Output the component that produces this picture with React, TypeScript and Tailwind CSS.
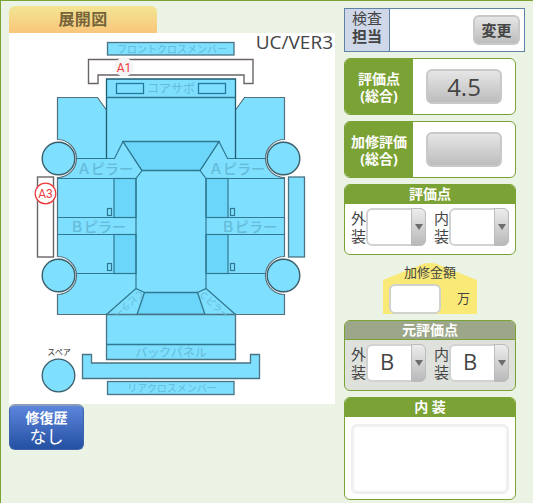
import type { ReactNode } from "react";

const BLUE = "#7fdfff";
const GLASS = "#6cd6fa";
const LINE = "#2f7890";

const buttonStyle =
  "rounded-md border-2 border-[#c9c9c9] bg-linear-to-b from-[#e6e6e6] to-[#bdbdbd] text-[#444]";

// Left side of the body, the right side is the same shape mirrored
function BodySide() {
  return (
    <g stroke={LINE} strokeWidth="1.2" fill={BLUE}>
      <path
        stroke="none"
        d="M106.5 110 L97.5 97.5 H57.5 V139.5 A19 19 0 0 1 57.5 177.5 V256.5 A19 19 0 0 1 57.5 294.5 V314.5 H172 V110 Z"
      />
      <path
        stroke="#55707c"
        fill="none"
        d="M106.5 110 L97.5 97.5 H57.5 V139.5 A19 19 0 0 1 57.5 177.5 V256.5 A19 19 0 0 1 57.5 294.5 V314.5 H107"
      />
      <path
        fill="none"
        stroke="#ececec"
        strokeWidth="2"
        d="M58 141 A17.7 17.7 0 0 1 58 176 M58 258 A17.7 17.7 0 0 1 58 293"
      />
      <rect x="114" y="178.5" width="22" height="39" fill={GLASS} />
      <rect x="114" y="234.5" width="22" height="39" fill={GLASS} />
      <path
        fill="none"
        d="M77 158.5 H114.5 L123 141.5 L142 170.5 L136 178.5 V288.5 L144.5 292.5 M57.5 178.5 H136 M57.5 217.5 H136 M57.5 234.5 H136 M77 273.5 H136 M136 288.5 L106.5 314.5"
      />
      <rect x="107.5" y="208.5" width="4" height="7" />
      <rect x="107.5" y="263.5" width="4" height="7" />
      <circle cx="58.5" cy="158.5" r="16.3" stroke="#3c5f6c" strokeWidth="1.4" />
      <circle cx="58.5" cy="275.5" r="16.3" stroke="#3c5f6c" strokeWidth="1.4" />
    </g>
  );
}

function CarDiagram() {
  return (
    <svg
      viewBox="9 33 326 371"
      className="block w-full overflow-visible bg-white font-['Open_Sans','Noto_Sans_CJK_JP',sans-serif]"
      role="img"
      aria-label="展開図"
    >
      <BodySide />
      <g transform="matrix(-1 0 0 1 342 0)">
        <BodySide />
      </g>

      <g fill={BLUE} stroke="#4a7383" strokeWidth="1.3">
        <path stroke="none" d="M106.5 79 H235.5 V141 H106.5 Z" />
        <path fill="none" stroke="#1f5c70" d="M106.5 158.5 V79 H235.5 V158.5" />
        <path d="M106.5 97.5 H235.5" stroke={LINE} />
        <rect x="116.5" y="83.5" width="27" height="10" stroke="#24799a" />
        <rect x="198.5" y="83.5" width="27" height="10" stroke="#24799a" />
        {/* windshield and rear window */}
        <path d="M123 141.5 H219 L200 170.5 H142 Z" fill={GLASS} stroke={LINE} />
        <path d="M144.5 292.5 H197.5 L205 314.5 H137 Z" fill={GLASS} stroke={LINE} />
        <rect x="107.5" y="42.5" width="126.5" height="12.5" />
        <path d="M106.5 314.5 H235.5 V359.5 H106.5 Z" />
        <path d="M106.5 344.5 H235.5" stroke={LINE} />
        <path d="M82.5 354.5 H91.5 V363 H250.5 V354.5 H259.5 V378.5 H82.5 Z" />
        <rect x="107.5" y="381.5" width="126.5" height="13" />
        <rect x="288.5" y="177" width="16" height="80" />
        <circle cx="58.5" cy="375.5" r="16.3" stroke="#3c5f6c" />
      </g>

      <g fill="#fff" stroke="#6b6466" strokeWidth="1.4">
        <path d="M88.5 59.5 H253 V83.5 H244 V75 H98 V83.5 H88.5 Z" />
        <rect x="37.5" y="177" width="16" height="80" />
      </g>

      <g fill="#64bbd8" textAnchor="middle" fontSize="10">
        <text x="172" y="52.5">フロントクロスメンバー</text>
        <text x="171" y="92.5" fontSize="12">コアサポ</text>
        <text x="172" y="392">リアクロスメンバー</text>
        <text x="171" y="356.5" fontSize="12">バックパネル</text>
        <g fontSize="14" fontWeight="500">
          <text x="105" y="174">Ａピラー</text>
          <text x="237" y="174">Ａピラー</text>
          <text x="98" y="231.5">Ｂピラー</text>
          <text x="249" y="231.5">Ｂピラー</text>
        </g>
        <g fontSize="9">
          <text transform="translate(127 301) rotate(139)">Ｃピラー</text>
          <text transform="translate(212 307) rotate(42)">Ｃピラー</text>
        </g>
        <text x="59" y="355" fontSize="8" fill="#333">スペア</text>
      </g>

      <circle cx="124" cy="67" r="9.5" fill="#f4f4f4" />
      <circle cx="45.5" cy="193.5" r="10.3" fill="#fff" stroke="#f0383c" strokeWidth="1.2" />
      <g fill="#f0383c" textAnchor="middle" fontSize="12" className="font-[Roboto,sans-serif]">
        <text x="124" y="71.5">A1</text>
        <text x="45.5" y="197.5">A3</text>
      </g>
      <text x="333" y="49" textAnchor="end" fontSize="19" fill="#444">
        UC/VER3
      </text>
    </svg>
  );
}

function ScoreCard({ title, value }: { title: string; value: string }) {
  return (
    <section className="mr-[9px] flex h-[57px] overflow-hidden rounded-md border border-[#7ba234] bg-white">
      <h2 className="flex w-2/5 flex-col justify-center bg-[#7ba234] text-center text-sm leading-[17px] font-bold text-white">
        <span>{title}</span>
        <span>(総合)</span>
      </h2>
      <div className="flex flex-1 items-center justify-center">
        <button
          type="button"
          aria-label={title}
          className={`${buttonStyle} h-[35px] w-3/4 text-2xl leading-none`}
        >
          {value}
        </button>
      </div>
    </section>
  );
}

function Panel({
  title,
  muted = false,
  children,
}: {
  title: string;
  muted?: boolean;
  children: ReactNode;
}) {
  return (
    <section
      className={`mr-[9px] overflow-hidden rounded-md border border-[#7ba234] ${
        muted ? "bg-[#dfe2dc]" : "bg-white"
      }`}
    >
      <h2
        className={`h-[19px] text-center text-sm leading-[18px] font-bold text-white ${
          muted ? "border-b border-[#7ba234] bg-[#9ca688]" : "bg-[#7ba234]"
        }`}
      >
        {title}
      </h2>
      {children}
    </section>
  );
}

function GradeSelect({ id, part, value }: { id: string; part: string; value: string }) {
  return (
    <div className="flex flex-1 items-center">
      <label htmlFor={id} className="w-[15px] text-[15px] leading-[18px] text-[#444]">
        <span className="block">{part}</span>
        <span className="block">装</span>
      </label>
      <div className="relative flex-1">
        <select
          id={id}
          defaultValue={value}
          className="block h-[38px] w-full appearance-none rounded-md border-2 border-[#d2d2d2] bg-white pb-1 pl-3 text-[22px] leading-none text-[#444]"
        >
          <option value=""></option>
          <option value="A">A</option>
          <option value="B">B</option>
          <option value="C">C</option>
        </select>
        <span className="pointer-events-none absolute inset-y-0 right-0 flex w-[15px] items-center justify-center rounded-r-md border border-[#bcbcbc] bg-linear-to-b from-[#ececec] to-[#b9b9b9]">
          <svg viewBox="0 0 8 6" className="h-[6px] w-[8px]">
            <path d="M0 0 H8 L4 6 Z" fill="#6c6c6c" />
          </svg>
        </span>
      </div>
    </div>
  );
}

function GradeRow({ name, value }: { name: string; value: string }) {
  return (
    <div className="flex h-[50px] gap-2 px-[6px] pb-1">
      <GradeSelect id={`${name}-ext`} part="外" value={value} />
      <GradeSelect id={`${name}-int`} part="内" value={value} />
    </div>
  );
}

export default function App() {
  return (
    <main className="grid min-h-screen grid-cols-[326fr_181fr] gap-[9px] border-t border-l border-[#7ba234] bg-[#ebf3e4] px-2 font-['Open_Sans','Noto_Sans_CJK_JP',sans-serif]">
      <div className="pt-[5px]">
        <h1 className="h-[27px] w-[148px] rounded-t-md bg-linear-to-b from-[#f2e594] to-[#fac67b] text-center text-base leading-[27px] font-bold tracking-wide text-[#75643a]">
          展開図
        </h1>
        <CarDiagram />
        <button
          type="button"
          className="flex h-[46px] w-[75px] flex-col items-center justify-center rounded-md border border-t-2 border-[#3d62ad] border-t-[#8c9cb8] bg-linear-to-b from-[#5c86dc] to-[#2450a2] text-white"
        >
          <span className="text-sm leading-[18px] font-bold">修復歴</span>
          <span className="text-[17px] leading-[20px]">なし</span>
        </button>
      </div>

      <div className="flex flex-col gap-[6px] pt-[7px]">
        <div className="flex h-[44px] border border-[#5f82a5] bg-white">
          <div className="w-[45px] border-r border-[#5f82a5] bg-[#cfd8e8] text-center text-[15px] leading-[18px] text-[#444]">
            <div>検査</div>
            <div className="font-bold">担当</div>
          </div>
          <div className="flex flex-1 items-center justify-end pr-1">
            <button
              type="button"
              className={`${buttonStyle} h-[30px] w-[47px] text-[15px] leading-none font-bold`}
            >
              変更
            </button>
          </div>
        </div>

        <ScoreCard title="評価点" value="4.5" />
        <ScoreCard title="加修評価" value="" />

        <Panel title="評価点">
          <GradeRow name="grade" value="" />
        </Panel>

        <div className="relative mr-[9px] w-[94px] self-center pt-[2px]">
          <svg
            viewBox="0 0 94 51"
            preserveAspectRatio="none"
            className="absolute inset-x-0 bottom-0 h-[51px] w-full"
          >
            <path d="M0 17 L40 1 Q47 -1 54 1 L94 17 V51 H0 Z" fill="#f9ea78" />
          </svg>
          <label
            htmlFor="repair-cost"
            className="relative block text-center text-[13px] leading-[19px] text-[#444]"
          >
            加修金額
          </label>
          <div className="relative mt-[2px] flex items-center pl-[6px]">
            <input
              id="repair-cost"
              type="text"
              className="h-[30px] w-[52px] rounded-md border-2 border-[#d2d2cc] bg-white px-1 text-sm text-[#444]"
            />
            <span className="ml-4 text-[13px] text-[#444]">万</span>
          </div>
        </div>

        <Panel title="元評価点" muted>
          <GradeRow name="base-grade" value="B" />
        </Panel>

        <Panel title="内 装">
          <div className="px-[6px] pt-[7px] pb-[5px]">
            <textarea
              aria-label="内装"
              className="block h-[70px] w-full resize-none rounded-md border-2 border-[#eeeeee] bg-white p-1 text-sm text-[#444] shadow-[inset_0_0_3px_#e2e2e2]"
            />
          </div>
        </Panel>
      </div>
    </main>
  );
}
